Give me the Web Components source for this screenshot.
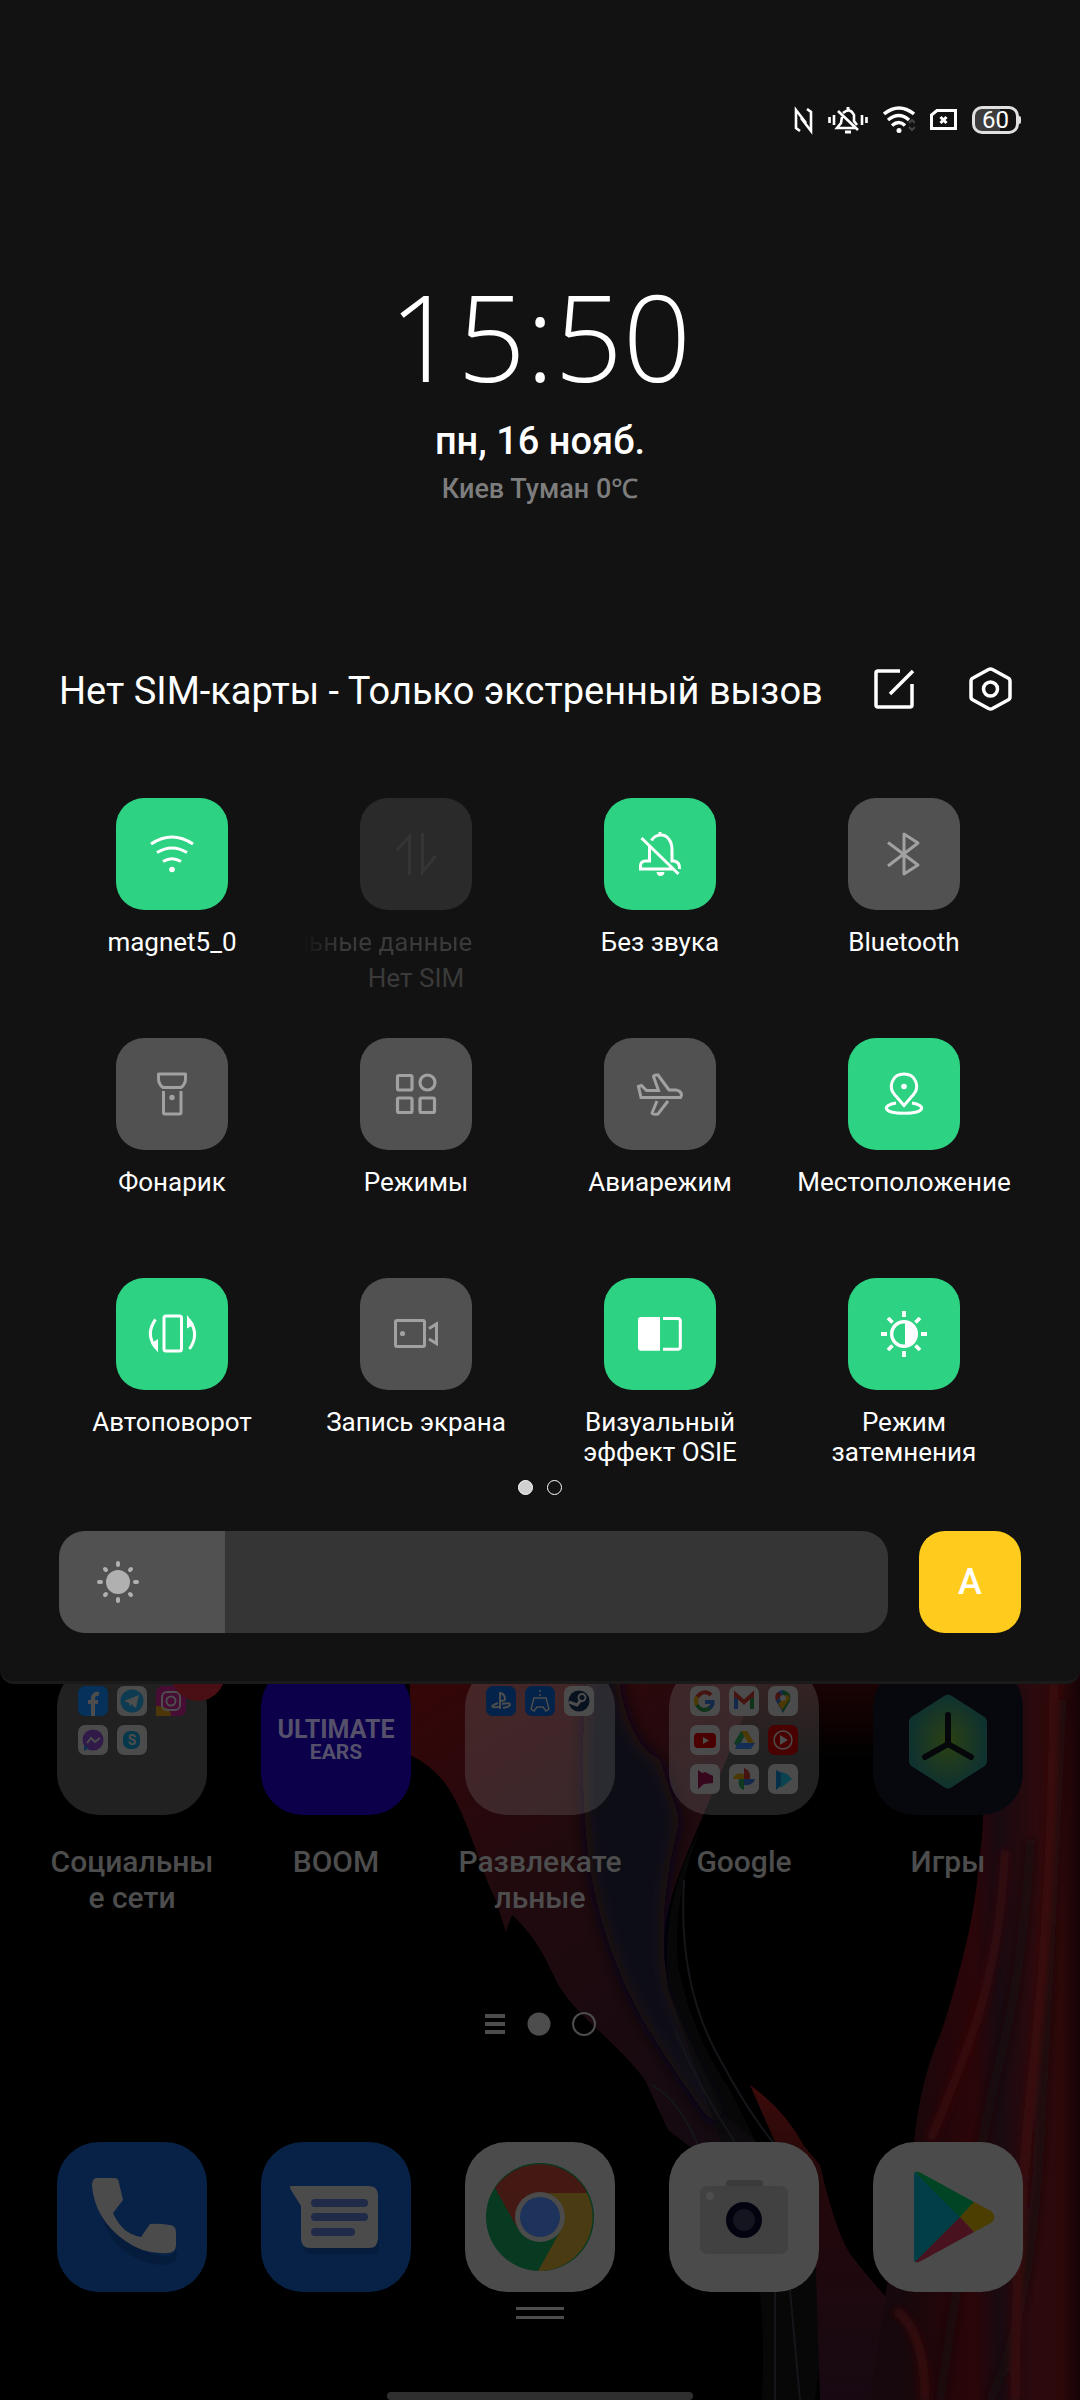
<!doctype html>
<html lang="ru">
<head>
  <meta charset="utf-8">
  <meta name="viewport" content="width=device-width, initial-scale=1.0">
  <title>Быстрые настройки</title>

  <style>
    body {
      margin: 0;
      background: #000;
      color: #fff;
      font-family: Roboto, "Noto Sans", sans-serif;
    }
  </style>

  <template id="status-bar">
    <style>
      :host {
        display: flex;
        justify-content: flex-end;
        align-items: center;
        gap: 15px;
        height: 32px;
        padding: 104px 59px 0;
      }
      svg { display: block; height: 32px; fill: none; stroke: #fff; stroke-width: 3; }
      .battery {
        position: relative;
        box-sizing: border-box;
        width: 47px;
        height: 28px;
        margin-right: 2px;
        border: 3px solid #e0e0e0;
        border-radius: 10px;
        background: linear-gradient(90deg, #3d3d3d 60%, #121212 60%);
        font-size: 24px;
        line-height: 22px;
        text-align: center;
      }
      .battery::after {
        content: "";
        position: absolute;
        right: -5px;
        top: 7px;
        width: 2px;
        height: 8px;
        border-radius: 0 2px 2px 0;
        background: #e0e0e0;
      }
    </style>
    <svg width="19" viewBox="0 0 19 32"><path d="M6 27L2 24V6L12 19M7 14L17 27V8L13 5" stroke-width="2.600"/></svg>
    <svg width="40" viewBox="0 0 40 32"><path d="M1.500 13v6M6 11v10M34 11v10M38.500 13v6M15 9q7-6 11 2v6l3 4M14 13l-1 6-4 5h18M10 7l20 19" stroke-width="2.600"/><path d="M20 3v3M17 28h6"/></svg>
    <svg width="32" viewBox="0 0 32 32"><path d="M1 10Q16-2 31 10M5 16q11-9 21 0M9 21.500q7-6 13 0" stroke-width="3.400"/><circle cx="16" cy="26.500" r="2.500" fill="#fff" stroke="none"/><path d="M27.500 19l3-3 3 3M27.500 23l3 3 3-3" stroke="#444" stroke-width="2" transform="translate(-1.500 0)"/></svg>
    <svg width="27" viewBox="0 0 27 32"><path d="M1.500 11L7 6.500h18.500v18h-24z"/><path d="M10.500 13l6 6M16.500 13l-6 6"/></svg>
    <div class="battery">60</div>
  </template>

  <template id="panel-clock">
    <style>
      :host { display: block; text-align: center; }
      .time { padding-top: 140px; font-family: "Open Sans", Roboto, sans-serif; font-size: 120px; line-height: 120px; font-weight: 300; }
      .date { padding-top: 21px; font-size: 38px; line-height: 48px; font-weight: 500; }
      .weather { padding-top: 6px; font-size: 27px; line-height: 36px; font-weight: 500; color: #7d7d7d; }
    </style>
    <div class="time"><slot name="time"></slot></div>
    <div class="date"><slot name="date"></slot></div>
    <div class="weather"><slot name="weather"></slot></div>
  </template>

  <template id="panel-header">
    <style>
      :host { display: flex; gap: 48px; padding: 160px 65px 0 59px; }
      .carrier { flex: 1; font-size: 38px; line-height: 48px; white-space: nowrap; }
      button { width: 48px; height: 48px; padding: 0; border: 0; background: none; }
      svg { display: block; fill: none; stroke: #fff; stroke-width: 3.500; }
    </style>
    <div class="carrier"><slot></slot></div>
    <button aria-label="Изменить"><svg width="48" height="48"><path d="M29 4H7q-2 0-2 2v32q0 2 2 2h32q2 0 2-2V17M42 4L19 27" stroke-linejoin="round"/></svg></button>
    <button aria-label="Настройки"><svg width="48" height="48"><path d="M21.500 2.500q2-1 4 0L41 11q2 1 2 3v16q0 2-2 3L25.500 41.500q-2 1-4 0L6 33q-2-1-2-3V14q0-2 2-3z"/><circle cx="23.500" cy="22" r="7"/></svg></button>
  </template>

  <template id="quick-tile">
    <style>
      :host { display: block; --tile: #515151; --glyph: #a1a1a1; }
      :host([on]) { --tile: #2dd282; --glyph: #fff; }
      :host([disabled]) { --tile: #2a2a2a; --glyph: #353535; color: #3a3a3a; }
      button {
        display: block;
        width: 100%;
        padding: 0;
        border: 0;
        background: none;
        color: inherit;
        font: inherit;
        font-size: 26px;
        line-height: 30px;
      }
      .box { display: block; width: 112px; height: 112px; margin: 0 auto 17px; border-radius: 28px; background: var(--tile); }
      svg { display: block; fill: none; stroke: var(--glyph); stroke-width: 3; }
      svg .f { fill: var(--glyph); stroke: none; }
      .label, .sub { display: block; }
      .sub { padding-top: 6px; }
      /* long label frozen in the middle of its marquee */
      :host([disabled]) .label {
        margin-left: 8px;
        overflow: hidden;
        text-align: left;
        text-indent: -8px;
        -webkit-mask-image: linear-gradient(90deg, transparent, #000 40px);
        mask-image: linear-gradient(90deg, transparent, #000 40px);
      }
    </style>
    <button>
      <span class="box"><svg width="112" height="112"></svg></span>
      <span class="label"><slot></slot></span>
      <span class="sub"><slot name="sub"></slot></span>
    </button>
  </template>

  <template id="tile-grid">
    <style>
      :host {
        display: grid;
        grid-template-columns: repeat(4, 1fr);
        grid-auto-rows: 192px;
        row-gap: 48px;
        padding: 83px 54px 0 50px;
      }
    </style>
    <slot></slot>
  </template>

  <template id="panel-dots">
    <style>
      :host { display: flex; justify-content: center; gap: 14px; padding-top: 10px; }
      i { box-sizing: border-box; width: 15px; height: 15px; border: 1px solid #fff; border-radius: 50%; }
      .on { background: #d0d0d0; }
    </style>
    <i class="on"></i><i></i>
  </template>

  <template id="brightness-row">
    <style>
      :host { display: flex; gap: 31px; padding: 36px 59px 48px; }
      label { position: relative; flex: 1; height: 102px; }
      input {
        display: block;
        width: 100%;
        height: 102px;
        margin: 0;
        border-radius: 26px;
        -webkit-appearance: none;
        appearance: none;
        background: linear-gradient(90deg, #515151 20%, #353535 20%);
      }
      input::-webkit-slider-thumb { -webkit-appearance: none; width: 1px; height: 102px; background: transparent; }
      svg { position: absolute; left: 36px; top: 28px; stroke: #b0b0b0; stroke-width: 4; stroke-linecap: round; }
      button {
        width: 102px;
        height: 102px;
        padding: 0;
        border: 0;
        border-radius: 26px;
        background: #ffcb1c;
        color: #fff;
        font: inherit;
        font-size: 36px;
        font-weight: 500;
      }
    </style>
    <label>
      <input type="range" min="0" max="100" value="20" aria-label="Яркость">
      <svg width="46" height="46" viewBox="-23 -23 46 46">
        <circle r="12" fill="#b0b0b0" stroke="none"/>
        <path d="M0-19v2M0 17v2M-19 0h2M17 0h2M-13-13l1 1M12 12l1 1M13-13l-1 1M-12 12l-1 1"/>
      </svg>
    </label>
    <button>A</button>
  </template>

  <template id="quick-panel">
    <style>
      :host {
        display: block;
        position: relative;
        z-index: 1;
        background: #121212;
        border-bottom: 3px solid #1a1a1a;
        border-radius: 0 0 14px 14px;
      }
    </style>
    <slot></slot>
  </template>

  <!-- Abstract paint wallpaper, already dimmed -->
  <template id="home-wallpaper">
    <style>
      :host { position: absolute; inset: 0; z-index: -1; }
      svg { display: block; width: 100%; height: 100%; }
    </style>
    <svg viewBox="0 1665 1080 735" preserveAspectRatio="xMidYMin slice">
      <defs>
        <linearGradient id="a" x1="410" y1="1700" x2="700" y2="2200" gradientUnits="userSpaceOnUse">
          <stop offset="0" stop-color="#340608"/><stop offset=".35" stop-color="#210a0e"/><stop offset="1" stop-color="#130a12"/>
        </linearGradient>
        <linearGradient id="b" x1="900" y1="0" x2="1080" y2="0" gradientUnits="userSpaceOnUse">
          <stop offset="0" stop-color="#16080c"/><stop offset=".4" stop-color="#2b0508"/><stop offset=".55" stop-color="#190a11"/><stop offset=".75" stop-color="#2c0a0d"/><stop offset=".9" stop-color="#2c0809"/><stop offset="1" stop-color="#160306"/>
        </linearGradient>
        <linearGradient id="c" x1="0" y1="2080" x2="0" y2="2400" gradientUnits="userSpaceOnUse">
          <stop offset="0" stop-color="#3d0b09"/><stop offset=".3" stop-color="#24080b"/><stop offset="1" stop-color="#170912"/>
        </linearGradient>
        <linearGradient id="d" x1="0" y1="1680" x2="0" y2="1760" gradientUnits="userSpaceOnUse">
          <stop offset="0" stop-color="#1c0304"/><stop offset="1" stop-color="#000"/>
        </linearGradient>
        <filter id="soft"><feGaussianBlur stdDeviation="9"/></filter>
        <filter id="edge"><feGaussianBlur stdDeviation="3"/></filter>
      </defs>
      <path fill="url(#d)" d="M740 1665H1080V1760H730z"/>
      <path fill="url(#a)" d="M410 1665V1755Q430 1764 445 1783C468 1815 480 1870 495 1898L506 1932 512 1915Q535 1935 552 1972C570 2015 612 2035 645 2080L668 2130 720 2170H790L718 2110C705 2060 664 2010 664 1945C664 1890 700 1830 738 1730L764 1665z"/>
      <path fill="#0c0c14" filter="url(#soft)" d="M590 1640Q575 1780 592 1880Q610 1970 655 2040T718 2130L725 2110Q690 2045 668 1990Q655 1910 680 1820L660 1760Q620 1740 615 1640z"/>
      <path fill="#0a0a0c" d="M700 1830Q672 1900 678 1965Q690 2030 730 2090L830 2290 815 2400H762Q770 2250 720 2140Q690 2050 668 1990Q660 1900 700 1830z" opacity=".7"/>
      <path fill="none" stroke="#15161a" stroke-width="2" d="M684 1880Q678 1980 715 2050T780 2150M652 2085Q680 2100 700 2150M675 2030Q700 2090 735 2142M775 2290V2400M790 2290L800 2400"/>
      <path fill="url(#c)" d="M750 2085Q785 2110 804 2146L820 2165Q835 2230 850 2254Q870 2280 889 2300L930 2400H820L816 2270Q810 2200 775 2142z"/>
      <path fill="url(#b)" d="M990 1665H1080V2400H870L885 2300Q895 2220 914 2142Q920 2080 942 2030Q974 1930 978 1870Q990 1790 975 1740z"/>
      <g fill="none" stroke-width="9" opacity=".7" filter="url(#edge)">
        <path stroke="#3f0710" d="M1005 1850Q1000 1960 970 2040T930 2140"/>
        <path stroke="#130910" d="M1030 1840Q1025 1960 1000 2060T940 2400M1062 1700Q1050 1960 1040 2140T990 2400"/>
        <path stroke="#430d0c" d="M1054 1684Q1052 1900 1034 2060T1015 2400M895 2310Q925 2330 925 2400"/>
      </g>
    </svg>
  </template>

  <template id="home-screen">
    <style>
      :host { display: block; position: relative; z-index: 0; margin-top: -19px; overflow: hidden; color: #4d4d4d; }
      .row { display: grid; grid-template-columns: repeat(5, 1fr); padding: 0 30px; }
      .apps { min-height: 252px; }
      .pager { display: flex; justify-content: center; align-items: center; gap: 21px; height: 24px; padding: 95px 0 106px; }
      .pager svg { display: block; }
      .handle { display: flex; flex-direction: column; align-items: center; gap: 6px; padding: 15px 0 73px; }
      .handle i { width: 48px; height: 3px; background: #4d4d4d; }
      .gesture { width: 306px; height: 8px; margin: 0 auto; border-radius: 4px; background: #2f2f2f; }
    </style>
    <home-wallpaper></home-wallpaper>
    <div class="row apps"><slot></slot></div>
    <div class="pager">
      <svg width="22" height="24"><path d="M1 4h20M1 12h20M1 20h20" stroke="#4d4d4d" stroke-width="4"/></svg>
      <svg width="24" height="24"><circle cx="12" cy="12" r="11.500" fill="#4d4d4d"/></svg>
      <svg width="24" height="24"><circle cx="12" cy="12" r="11" fill="none" stroke="#4d4d4d" stroke-width="2"/></svg>
    </div>
    <div class="row"><slot name="dock"></slot></div>
    <div class="handle"><i></i><i></i></div>
    <div class="gesture"></div>
  </template>

  <template id="home-app">
    <style>
      :host { display: block; }
      a { display: block; position: relative; color: inherit; text-decoration: none; text-align: center; font-size: 30px; line-height: 36px; font-weight: 500; }
      .icon { display: block; box-sizing: border-box; width: 150px; height: 150px; margin: 0 auto; border-radius: 42px; background: var(--bg, #4b4b4b); overflow: hidden; }
      .folder { display: grid; grid-template-columns: repeat(3, 30px); grid-auto-rows: 30px; gap: 9px; padding: 21px; background: rgba(128, 128, 128, .26); }
      svg { display: block; }
      .label { display: block; padding-top: 29px; white-space: pre-line; }
      .label:empty { display: none; }
      .badge { position: absolute; left: 141px; top: -18px; width: 54px; height: 54px; border-radius: 50%; background: #4a0f14; }
      .brand { display: flex; flex-direction: column; align-items: center; padding-top: 52px; color: #55516b; font-weight: 700; }
      .big { font-size: 25px; line-height: 25px; }
      .small { font-size: 21px; line-height: 21px; }
    </style>
    <a href="#"><span class="icon"></span><span class="label"></span></a>
  </template>
</head>
<body>

<quick-panel>
  <status-bar></status-bar>
  <panel-clock>
    <span slot="time">15:50</span>
    <span slot="date">пн, 16 нояб.</span>
    <span slot="weather">Киев Туман 0℃</span>
  </panel-clock>
  <panel-header>Нет SIM-карты - Только экстренный вызов</panel-header>
  <tile-grid>
    <quick-tile icon="wifi" on>magnet5_0</quick-tile>
    <quick-tile icon="data" disabled>льные данные<span slot="sub">Нет SIM</span></quick-tile>
    <quick-tile icon="mute" on>Без звука</quick-tile>
    <quick-tile icon="bluetooth">Bluetooth</quick-tile>
    <quick-tile icon="torch">Фонарик</quick-tile>
    <quick-tile icon="modes">Режимы</quick-tile>
    <quick-tile icon="plane">Авиарежим</quick-tile>
    <quick-tile icon="location" on>Местоположение</quick-tile>
    <quick-tile icon="rotate" on>Автоповорот</quick-tile>
    <quick-tile icon="record">Запись экрана</quick-tile>
    <quick-tile icon="osie" on>Визуальный<br>эффект OSIE</quick-tile>
    <quick-tile icon="dark" on>Режим<br>затемнения</quick-tile>
  </tile-grid>
  <panel-dots></panel-dots>
  <brightness-row></brightness-row>
</quick-panel>

<home-screen>
  <home-app folder="facebook telegram instagram messenger skype" badge label="Социальны|е сети"></home-app>
  <home-app icon="boom" bg="#0c004b" label="BOOM"></home-app>
  <home-app folder="playstation remote steam" label="Развлекате|льные"></home-app>
  <home-app folder="google gmail maps youtube drive music movies photos books" label="Google"></home-app>
  <home-app icon="games" bg="#07080e" label="Игры"></home-app>
  <home-app slot="dock" icon="phone" bg="#082247" name="Телефон"></home-app>
  <home-app slot="dock" icon="messages" bg="#082247" name="Сообщения"></home-app>
  <home-app slot="dock" icon="chrome" name="Chrome"></home-app>
  <home-app slot="dock" icon="camera" name="Камера"></home-app>
  <home-app slot="dock" icon="play" name="Play Маркет"></home-app>
</home-screen>

<script>
  // Quick tile glyphs, on a 112 x 112 box
  const GLYPHS = {
    wifi: '<path d="M35 46Q56 32 77 46M41 54.500Q56 45.500 71 54.500M47 63.500Q56 58 65 63.500"/><circle class="f" cx="56" cy="71.500" r="2.800"/>',
    data: '<path d="M37 52L49.500 38.500V77M62.500 35V74L75.500 58"/>',
    mute: '<path d="M47.500 42.500C51 36 61 35 65 41.500Q68 45 68 52V63H70Q76 64 75.500 71M45.500 48V63H41Q36.500 63.500 36.500 68V71H69M37.500 40L74.500 76M56 34v4"/><path class="f" d="M52.500 74h8q-.5 4-4 4t-4-4z"/>',
    bluetooth: '<path d="M40 44.500L70 67 56 76V36L70 45 40 68" stroke-linejoin="round"/>',
    torch: '<path d="M42.500 36H69.500V41Q69.500 46 65 49.500H47Q42.500 46 42.500 41ZM47.500 53V74.500Q47.500 76 49 76H63.500Q65 76 65 74.500V53" stroke-linejoin="round"/><circle class="f" cx="56" cy="59.500" r="2.700"/>',
    modes: '<g stroke-width="3.200"><rect x="37.500" y="37.500" width="14.500" height="14.500" rx="1.500"/><circle cx="67.500" cy="44.500" r="7.500"/><rect x="37.500" y="60" width="14.500" height="14.500" rx="1.500"/><rect x="60" y="60" width="14.500" height="14.500" rx="1.500"/></g>',
    plane: '<path d="M34.500 48.500L37.500 47.500 42.500 52.500H54.500L49.500 38.500Q50 36.500 54 37L65 52H72Q77.500 53 77.500 57.500L76.500 59.500H37ZM53 63L48 75Q48.500 77 54 76L64 63" />',
    location: '<path d="M56 67.500L46.500 56.500C40 49 44 36 56 36S72 49 65.500 56.500ZM48 65C34 67 34 75.300 56 75.300S78 67 64 65"/><circle class="f" cx="56" cy="48.500" r="2.800"/>',
    rotate: '<rect x="48" y="38" width="17.500" height="35" rx="2"/><path d="M39.500 41.500Q29 56 40 70M73.500 71Q84 56 73 42"/><path class="f" d="M42 61V74.500L35 65.500ZM71 37V50.500L78 46.500Z"/>',
    record: '<rect x="35.500" y="42.500" width="29" height="26" rx="1.500"/><circle class="f" cx="42.500" cy="55.500" r="2.600"/><path d="M69 50.500L76.500 46V65.500L69 61"/>',
    osie: '<path class="f" d="M37 39H56V72.700H37Q34 72.700 34 69.700V42Q34 39 37 39Z"/><path d="M59 40.500H73.500Q76.300 40.500 76.300 43V69Q76.300 71.300 73.500 71.300H59"/>',
    dark: '<circle cx="56" cy="56" r="12.300" stroke-width="3.400"/><path class="f" d="M57 43.500a12.500 12.500 0 0 1 0 25z"/><path d="M56 33v6M56 73v6M33 56h6M73 56h6M40 40l4.500 4.500M67.500 67.500L72 72M72 40l-4.500 4.500M44.500 67.500L40 72" stroke-width="3.800"/>'
  };

  // Folder thumbnails, 30 x 30
  const MINIS = {
    facebook: ['#06315a', '<path d="M15 30V13q0-6 6-5M10 16h10" fill="none" stroke="#4d4d4d" stroke-width="4"/>'],
    telegram: ['#4b4b4b', '<circle cx="15" cy="15" r="11.500" fill="#0d3c52"/><path d="M7 15L22 9 19 22 14 18 13 21 12 17z" fill="#4d4d4d"/>'],
    instagram: ['#470d35', '<path d="M0 30V20Q15 20 15 30z" fill="#4d3708"/><rect x="6" y="6" width="18" height="18" rx="5" fill="none" stroke="#4d4d4d" stroke-width="2"/><circle cx="15" cy="15" r="4.500" fill="none" stroke="#4d4d4d" stroke-width="2"/>'],
    messenger: ['#4b4b4b', '<circle cx="15" cy="15" r="10.500" fill="#311a4a"/><path d="M6 20v6l5-3z" fill="#102f52"/><path d="M9 18l4-5 4 4 5-4" fill="none" stroke="#4d4d4d" stroke-width="2"/>'],
    skype: ['#4b4b4b', '<rect x="6" y="6" width="17" height="18" rx="7" fill="#05384a"/><text x="15" y="20" text-anchor="middle" font-size="14" font-weight="700" fill="#4d4d4d">S</text>'],
    playstation: ['#04234a', '<path d="M14 23V7q5 1 5 6 0 2-4 2M12 17q-8 3-5 4 3 1 8-1M16 18q8-2 8 1-1 2-7 3" fill="none" stroke="#4d4d4d" stroke-width="2"/>'],
    remote: ['#04234a', '<path d="M9 12h12l3 11-3 2-3-4h-6l-3 4-3-2zM15 4v2M15 8v2" fill="none" stroke="#4d4d4d" stroke-width="1.500"/>'],
    steam: ['#4b4b4b', '<circle cx="15" cy="15" r="10.500" fill="#08121f"/><circle cx="18" cy="11.500" r="3.500" fill="none" stroke="#4d4d4d" stroke-width="2"/><path d="M5 16l8 3 4-5" fill="none" stroke="#4d4d4d" stroke-width="3"/>'],
    google: ['#4b4b4b', '<g fill="none" stroke-width="4"><path d="M21 9Q16 4 10 8L7 11" stroke="#461410"/><path d="M7 10.500q-2 4 0 9" stroke="#4b3802"/><path d="M7 19q5 8 13 3" stroke="#0f3319"/><path d="M19.500 22q4-3 3-6H15" stroke="#142849"/></g>'],
    gmail: ['#4b4b4b', '<g fill="none" stroke-width="4"><path d="M7 23V11" stroke="#142849"/><path d="M23 23V11" stroke="#0f3319"/><path d="M7 12V9l8 7 8-7v3" stroke="#461410"/></g>'],
    maps: ['#4b4b4b', '<path d="M15 27L8 15Q6 5 15 4z" fill="#142849"/><path d="M15 27l7-12Q24 6 15 4z" fill="#0f3319"/><path d="M8 15l6-6-4-3Q6 8 8 15z" fill="#461410"/><path d="M10 18l9-10 3 4-8 12z" fill="#4b3802"/><circle cx="15" cy="12" r="3" fill="#4b4b4b"/>'],
    youtube: ['#4b4b4b', '<rect x="4" y="8" width="22" height="15" rx="4" fill="#4a0000"/><path d="M13 12l6 3.500-6 3.500z" fill="#4d4d4d"/>'],
    drive: ['#4b4b4b', '<path d="M12 6h6l-9 17-4-5z" fill="#0f3a20"/><path d="M12 6h6l8 13h-6z" fill="#4b3802"/><path d="M9 18h17l-4 6H6z" fill="#142f55"/>'],
    music: ['#490000', '<circle cx="15" cy="15" r="9" fill="none" stroke="#4d4d4d" stroke-width="1.500"/><path d="M12 10l8 5-8 5z" fill="#4d4d4d"/>'],
    movies: ['#4b4b4b', '<path d="M8 6l4 3 3-1 8 4v7l-9 1-6 5z" fill="#35061c"/>'],
    photos: ['#4b4b4b', '<path d="M15 15V4q7 2 6 11z" fill="#461410"/><path d="M15 15h11q-2 7-11 6z" fill="#142849"/><path d="M15 15v11q-7-2-5-11z" fill="#0f3a20"/><path d="M15 15H4q2-7 11-5z" fill="#4b3802"/>'],
    books: ['#4b4b4b', '<path d="M8 6l6 3V21l-6 5z" fill="#06304a"/><path d="M13 8l6 2 5 5-11 9z" fill="#0b4350"/>']
  };

  // Launcher icons, 150 x 150
  const APPS = {
    boom: '<span class="brand"><span class="big">ULTIMATE</span><span class="small">EARS</span></span>',
    games: `<svg width="150" height="150"><defs><radialGradient id="g"><stop offset="0" stop-color="#2b4011"/><stop offset="1" stop-color="#0f3230"/></radialGradient></defs>
      <path d="M71 31q4-3 8 0l31 20q4 2 4 6v39q0 4-4 6l-31 20q-4 3-8 0L40 102q-4-2-4-6V57q0-4 4-6z" fill="url(#g)"/>
      <path d="M75 50v29L52 92M75 79l23 13" fill="none" stroke="#05070b" stroke-width="6" stroke-linecap="round"/></svg>`,
    phone: `<svg width="150" height="150"><path d="M44 40q8 68 67 75l9-6v6q-4 9-17 8Q52 116 42 63z" fill="#061c3d"/>
      <path d="M40 36h17q5 0 5 5l4 17-10 13q9 21 28 24l9-13q7-1 20 1 6 1 6 7v14q-1 7-8 7-24 2-44-13-29-21-32-54 0-8 5-8z" fill="#4b4b4b"/></svg>`,
    messages: `<svg width="150" height="150"><path d="M42 98h76v9q0 5-8 5H50q-7 0-8-7z" fill="#061c3d"/>
      <path d="M30 44h77q10 0 10 9v43q0 10-9 10H49q-9 0-9-10V64L30 48q-2-4 0-4z" fill="#4b4b4b"/>
      <path d="M54 61h49M54 75h49M54 90h36" stroke="#1f2b49" stroke-width="8" stroke-linecap="round"/></svg>`,
    chrome: `<svg width="150" height="150"><circle cx="75" cy="75" r="54" fill="#073a20"/>
      <path d="M75 75L30 46A54 54 0 0 1 122 50z" fill="#441913"/><path d="M30 46L53 87 76 75z" fill="#441913"/>
      <path d="M75 51H122A54 54 0 0 1 73 129L97 86z" fill="#4a3b12"/>
      <circle cx="75" cy="75" r="25" fill="#4b4b4b"/><circle cx="75" cy="75" r="20" fill="#1e335c"/></svg>`,
    camera: `<svg width="150" height="150"><path d="M57 44v-3q0-3 4-3h29q4 0 4 3v3z" fill="#3b3b3b"/><rect x="31" y="44" width="88" height="68" rx="7" fill="#414141"/>
      <circle cx="41" cy="54" r="4" fill="#4d4d4d"/><circle cx="75" cy="78" r="18" fill="#03030f"/><circle cx="75" cy="78" r="11" fill="#15151f"/></svg>`,
    play: `<svg width="150" height="150"><path d="M41 32q1-4 6-1L88 75 47 119q-5 3-6-1z" fill="#003e48"/>
      <path d="M42 30q2-1 6 1l53 29-14 15z" fill="#004523"/><path d="M101 60l17 9q7 6 0 12l-17 9-14-15z" fill="#4b3e00"/>
      <path d="M42 120q2 1 6-1l53-29-14-15z" fill="#48131f"/></svg>`
  };

  function stamp(host) {
    const root = host.attachShadow({mode: 'open'});
    root.appendChild(document.getElementById(host.localName).content.cloneNode(true));
    return root;
  }

  // Elements that only need their template
  ['status-bar', 'panel-clock', 'panel-header', 'tile-grid', 'panel-dots', 'brightness-row',
   'quick-panel', 'home-wallpaper', 'home-screen'].forEach(name => {
    customElements.define(name, class extends HTMLElement {
      constructor() {
        super();
        stamp(this);
      }
    });
  });

  customElements.define('quick-tile', class extends HTMLElement {
    connectedCallback() {
      const root = stamp(this);
      root.querySelector('svg').innerHTML = GLYPHS[this.getAttribute('icon')];
      const button = root.querySelector('button');
      button.disabled = this.hasAttribute('disabled');
      button.setAttribute('aria-pressed', this.hasAttribute('on'));
    }
  });

  customElements.define('home-app', class extends HTMLElement {
    connectedCallback() {
      const root = stamp(this);
      const icon = root.querySelector('.icon');
      const folder = this.getAttribute('folder');
      if (folder) {
        icon.classList.add('folder');
        icon.innerHTML = folder.split(' ').map(name => {
          const [bg, art] = MINIS[name];
          return `<svg width="30" height="30"><rect width="30" height="30" rx="7" fill="${bg}"/>${art}</svg>`;
        }).join('');
      } else {
        icon.innerHTML = APPS[this.getAttribute('icon')];
      }
      if (this.hasAttribute('bg')) {
        icon.style.setProperty('--bg', this.getAttribute('bg'));
      }
      if (this.hasAttribute('name')) {
        root.querySelector('a').setAttribute('aria-label', this.getAttribute('name'));
      }
      if (this.hasAttribute('badge')) {
        icon.insertAdjacentHTML('afterend', '<span class="badge"></span>');
      }
      root.querySelector('.label').textContent = (this.getAttribute('label') || '').replace('|', '\n');
    }
  });
</script>
</body>
</html>
